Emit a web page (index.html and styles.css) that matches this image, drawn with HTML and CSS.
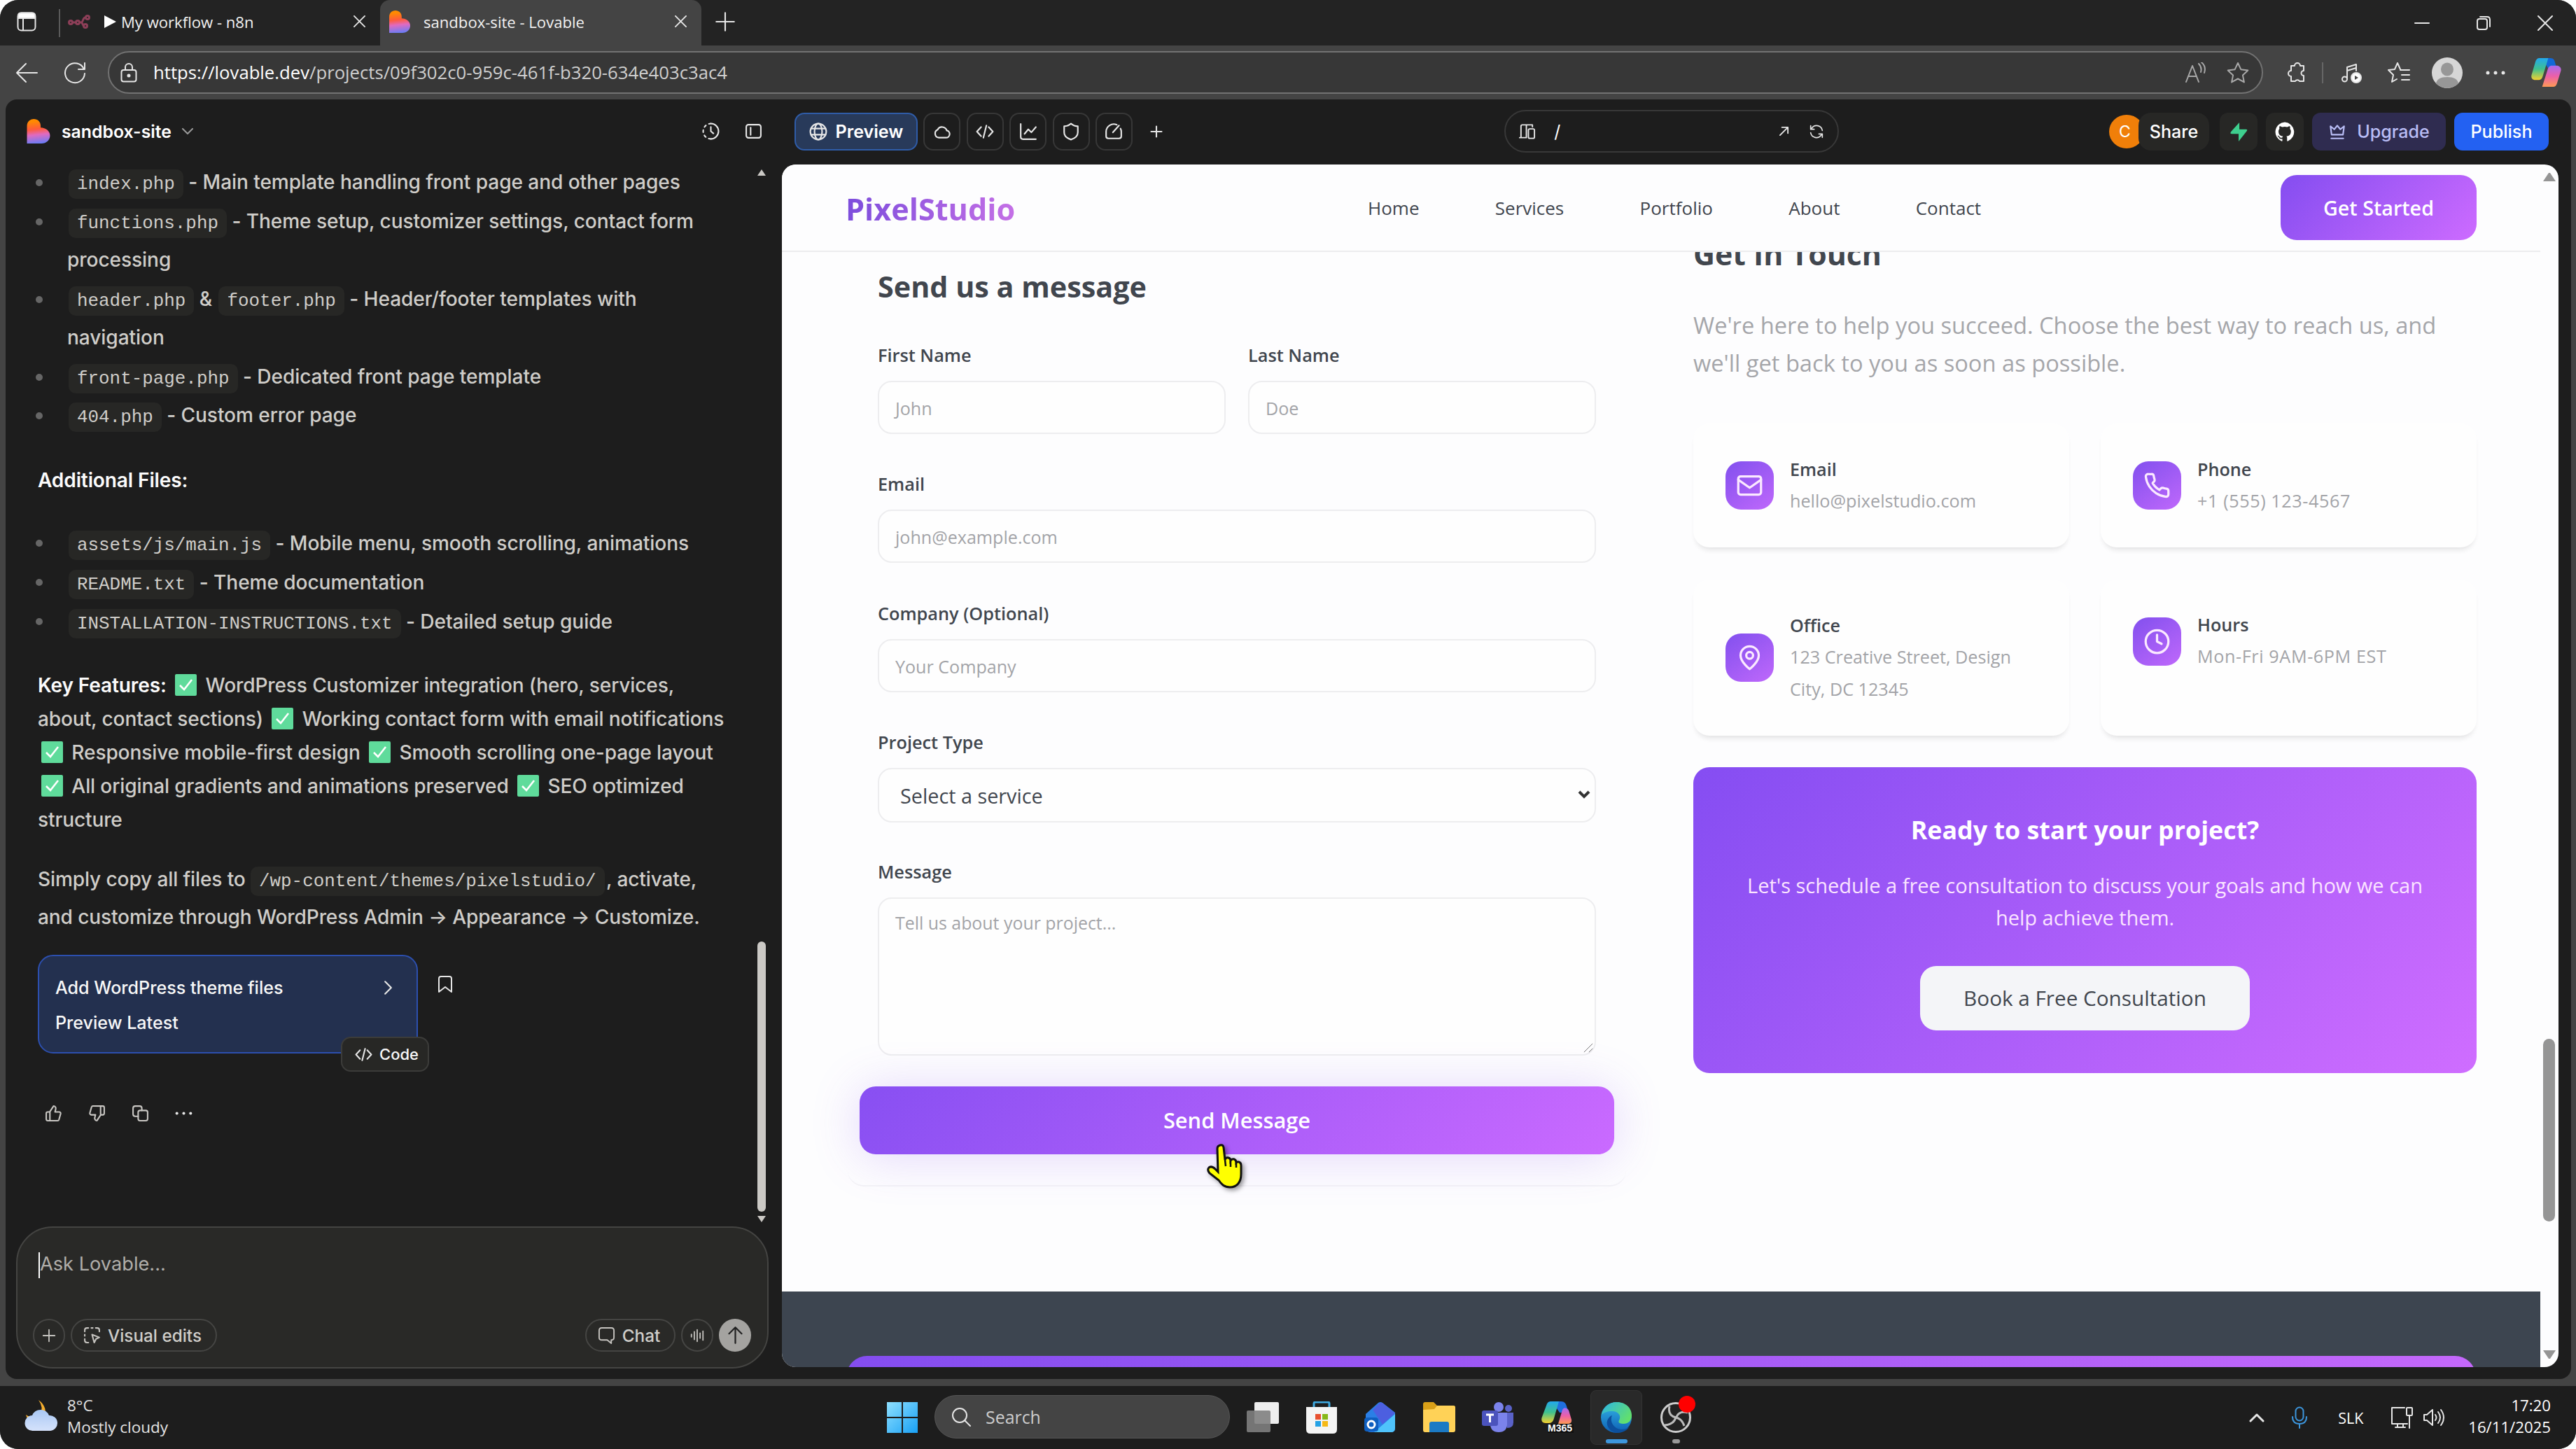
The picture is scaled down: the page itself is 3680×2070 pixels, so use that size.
FILE: index.html
```html
<!DOCTYPE html>
<html lang="en">
<head>
<meta charset="UTF-8">
<meta name="viewport" content="width=device-width, initial-scale=1.0">
<title>sandbox-site - Lovable</title>
<link rel="stylesheet" href="styles.css">
</head>
<body>
<svg class="defs" aria-hidden="true">
  <defs>
    <linearGradient id="heartFill" x1="0.3" y1="0" x2="0.4" y2="1">
      <stop offset="0.1" stop-color="#ff8a00"/>
      <stop offset="0.42" stop-color="#ff5a3c"/>
      <stop offset="0.65" stop-color="#e06ac0"/>
      <stop offset="1" stop-color="#6c7cf5"/>
    </linearGradient>
    <linearGradient id="winFill" x1="0" y1="0" x2="1" y2="1">
      <stop offset="0" stop-color="#8fe0ff"/>
      <stop offset="1" stop-color="#18a0f5"/>
    </linearGradient>
    <linearGradient id="copilotLeft" x1="0" y1="0" x2="0" y2="1">
      <stop offset="0" stop-color="#22a8ee"/>
      <stop offset="0.5" stop-color="#3fc08f"/>
      <stop offset="1" stop-color="#f3d02f"/>
    </linearGradient>
    <linearGradient id="copilotRight" x1="0" y1="0" x2="0" y2="1">
      <stop offset="0" stop-color="#a66cf0"/>
      <stop offset="0.5" stop-color="#ec5fa8"/>
      <stop offset="1" stop-color="#ff9a55"/>
    </linearGradient>
    <linearGradient id="edgeBlue" x1="0" y1="0" x2="0" y2="1">
      <stop offset="0" stop-color="#35b8e8"/>
      <stop offset="1" stop-color="#0d5fb4"/>
    </linearGradient>
    <linearGradient id="edgeGreen" x1="0" y1="0" x2="1" y2="0.6">
      <stop offset="0" stop-color="#2cb5e6"/>
      <stop offset="1" stop-color="#62e06c"/>
    </linearGradient>
    <linearGradient id="cloudFill" x1="0" y1="0" x2="0" y2="1">
      <stop offset="0" stop-color="#a9c8f4"/>
      <stop offset="1" stop-color="#d5e2fb"/>
    </linearGradient>
  </defs>
  <symbol id="heart" viewBox="0 0 32 34"><path fill="url(#heartFill)" d="M0 10C0 4 4 0 9.500 0S19 4 19 9.500v2.500C26 12 32 17 32 23S27 34 20 34H0z"/></symbol>
  <symbol id="x" viewBox="0 0 18 18"><path d="M1 1l16 16M17 1L1 17"/></symbol>
  <symbol id="plus" viewBox="0 0 24 24"><path d="M12 3v18M3 12h18"/></symbol>
  <symbol id="code" viewBox="0 0 24 24"><path d="M7 6l-5.500 6L7 18M17 6l5.500 6-5.500 6M14 4l-4 16"/></symbol>
  <symbol id="check" viewBox="0 0 31 31"><rect width="31" height="31" rx="2" fill="#5fdb9b"/><path d="M7 16l6 6L24 8" fill="none" stroke="#fff" stroke-width="2.600"/></symbol>
  <symbol id="copilot" viewBox="0 0 44 42">
    <path fill="#1268d8" d="M13 0h15c5 0 6 3 7 7l2 7H24l-5-9z"/>
    <path fill="url(#copilotLeft)" d="M12 0h13l-8 26c-1 4-3 6-7 6H6c-5 0-7-4-5-9L6 6c1-4 3-6 6-6z"/>
    <path fill="url(#copilotRight)" d="M32 42H16l8-25c1-4 3-6 7-6h6c5 0 8 4 6 9l-5 16c-1 4-3 6-6 6z"/>
  </symbol>
</svg>

<div class="window">
  <!-- browser tabs -->
  <div class="tabs">
    <svg class="line tab-actions" viewBox="0 0 28 28"><rect x="1.500" y="1.500" width="25" height="25" rx="5"/><path d="M9 9v17"/><path d="M2 5q0-3.500 4-3.500h16q4 0 4 3.500v4H2z" fill="#fff"/></svg>
    <span class="tab-sep"></span>
    <div class="tab">
      <svg class="n8n" viewBox="0 0 32 20"><g fill="none" stroke="#8d3f58" stroke-width="3"><circle cx="4" cy="11" r="2.500"/><circle cx="14" cy="11" r="2.500"/><circle cx="28" cy="4" r="2.500"/><circle cx="25" cy="16" r="2.500"/><path d="M6 11h6M16 11h3c3 0 2-7 6-7M19 11c2 0 2 5 4 5"/></g></svg>
      <span class="play"></span>
      <span class="tab-title">My workflow - n8n</span>
      <svg class="line close"><use href="#x"/></svg>
    </div>
    <div class="tab active">
      <svg class="fav"><use href="#heart"/></svg>
      <span class="tab-title">sandbox-site - Lovable</span>
      <svg class="line close"><use href="#x"/></svg>
    </div>
    <svg class="line new-tab"><use href="#plus"/></svg>
    <div class="win-buttons">
      <svg class="line" viewBox="0 0 22 22"><path d="M1 11h20"/></svg>
      <svg class="line" viewBox="0 0 22 22"><rect x="2" y="5" width="14" height="15" rx="3"/><path d="M6 2h10q4 0 4 4v10"/></svg>
      <svg class="line" viewBox="0 0 22 22"><path d="M1 1l20 20M21 1L1 21"/></svg>
    </div>
  </div>

  <!-- address row -->
  <div class="toolbar">
    <svg class="line back" viewBox="0 0 32 32"><path d="M31 16H2M15 3L2 16l13 13"/></svg>
    <svg class="line reload" viewBox="0 0 32 32"><path d="M29 11A14 14 0 1 0 30 17M30 2v9h-9"/></svg>
    <div class="address">
      <svg class="line lock" viewBox="0 0 24 28"><rect x="1.500" y="10" width="21" height="16.500" rx="3"/><path d="M7 10V6a5 5 0 0 1 10 0v4"/><circle cx="12" cy="18" r="1.500" fill="#fff"/></svg>
      <span class="url"><b>https://lovable.dev</b>/projects/09f302c0-959c-461f-b320-634e403c3ac4</span>
      <svg class="line dim read" viewBox="0 0 30 30"><path d="M2 28L11 5l9 23M5 20h12M20 2q5 5 3 12M24 0q7 6 4 15"/></svg>
      <svg class="line dim star" viewBox="0 0 32 32"><path d="M16 2l4.300 9.200 10 1.300-7.400 6.900 2 10L16 24.500 7.100 29.400l2-10-7.400-6.900 10-1.300z"/></svg>
    </div>
    <div class="browser-icons">
      <svg class="line" viewBox="0 0 32 32"><path d="M9 6h5a4 4 0 0 1 8 0h5v7a3.500 3.500 0 0 0 0 7v8h-6a3.500 3.500 0 0 0-6 0H9v-7a4 4 0 1 1 0-8z"/></svg>
      <span class="bar-sep"></span>
      <svg class="line media" viewBox="0 0 32 32"><path d="M11 25V8l13-4v9M11 13l13-4"/><circle cx="7.500" cy="25" r="3.500"/><circle cx="24" cy="23" r="7" fill="#fff"/><path d="M22 20v6l5-3z" fill="#444" stroke="none"/></svg>
      <svg class="line favorites" viewBox="0 0 32 32"><path d="M18 11l-4-9-4 9-9 1 7 7-2 10 7-4M18 12h13M20 19h11M20 26h11"/></svg>
      <svg class="avatar" viewBox="0 0 44 44"><circle cx="22" cy="22" r="22" fill="#d6d6d6"/><ellipse cx="22" cy="17" rx="9" ry="9.500" fill="#979797"/><path d="M6 37q2-9 16-9t16 9a22 22 0 0 1-32 0z" fill="#979797"/></svg>
      <svg class="dots" viewBox="0 0 28 6"><circle cx="3" cy="3" r="2.500"/><circle cx="14" cy="3" r="2.500"/><circle cx="25" cy="3" r="2.500"/></svg>
      <svg class="copilot"><use href="#copilot"/></svg>
    </div>
  </div>

  <div class="app">
    <!-- chat side -->
    <aside class="chat">
      <div class="chat-head">
        <svg class="logo"><use href="#heart"/></svg>
        <span class="project">sandbox-site</span>
        <svg class="line chev" viewBox="0 0 16 9"><path d="M1 1l7 7 7-7"/></svg>
        <svg class="line history" viewBox="0 0 24 24"><path d="M12 1.500a10.500 10.500 0 0 1 0 21"/><path d="M12 22.500a10.500 10.500 0 0 1 0-21" stroke-dasharray="3 4.500"/><path d="M12 6v6l3.500 3"/></svg>
        <svg class="line panel" viewBox="0 0 24 24"><rect x="2" y="3" width="20" height="18" rx="3"/><path d="M8 7v10"/></svg>
      </div>

      <div class="messages">
        <ul>
          <li><code>index.php</code> - Main template handling front page and other pages</li>
          <li><code>functions.php</code> - Theme setup, customizer settings, contact form<br>processing</li>
          <li><code>header.php</code> &amp; <code>footer.php</code> - Header/footer templates with<br>navigation</li>
          <li><code>front-page.php</code> - Dedicated front page template</li>
          <li><code>404.php</code> - Custom error page</li>
        </ul>
        <p class="sub"><strong>Additional Files:</strong></p>
        <ul class="extra">
          <li><code>assets/js/main.js</code> - Mobile menu, smooth scrolling, animations</li>
          <li><code>README.txt</code> - Theme documentation</li>
          <li><code>INSTALLATION-INSTRUCTIONS.txt</code> - Detailed setup guide</li>
        </ul>
        <p class="features"><strong>Key Features:</strong> <svg class="check"><use href="#check"/></svg> WordPress Customizer integration (hero, services,<br>
          about, contact sections) <svg class="check"><use href="#check"/></svg> Working contact form with email notifications<br>
          <svg class="check"><use href="#check"/></svg> Responsive mobile-first design <svg class="check"><use href="#check"/></svg> Smooth scrolling one-page layout<br>
          <svg class="check"><use href="#check"/></svg> All original gradients and animations preserved <svg class="check"><use href="#check"/></svg> SEO optimized<br>
          structure</p>
        <p class="install">Simply copy all files to <code>/wp-content/themes/pixelstudio/</code>&hairsp;, activate,<br>and customize through WordPress Admin → Appearance → Customize.</p>

        <div class="edit-row">
          <div class="edit-card">
            <div class="edit-title">Add WordPress theme files
              <svg class="line" viewBox="0 0 12 20"><path d="M2 2l8 8-8 8"/></svg>
            </div>
            <div class="edit-sub">Preview Latest</div>
            <div class="code-badge"><svg class="line"><use href="#code"/></svg>Code</div>
          </div>
          <svg class="line bookmark" viewBox="0 0 22 26"><path d="M2 24V5q0-3 3-3h12q3 0 3 3v19l-9-7z"/></svg>
        </div>

        <div class="feedback">
          <svg class="line" viewBox="0 0 24 24"><path d="M7 10v12M15 5.900L14 10h5.800a2 2 0 0 1 1.900 2.600l-2.300 8A2 2 0 0 1 17.500 22H4a2 2 0 0 1-2-2v-8a2 2 0 0 1 2-2h2.800L12 2a3.100 3.100 0 0 1 3 3.900z"/></svg>
          <svg class="line" viewBox="0 0 24 24"><path d="M17 14V2M9 18.100L10 14H4.200a2 2 0 0 1-1.900-2.600l2.300-8A2 2 0 0 1 6.500 2H20a2 2 0 0 1 2 2v8a2 2 0 0 1-2 2h-2.800L12 22a3.100 3.100 0 0 1-3-3.900z"/></svg>
          <svg class="line" viewBox="0 0 24 24"><rect x="9" y="8" width="13" height="14" rx="2.500"/><path d="M9 16H5q-3 0-3-3V5q0-3 3-3h6q3 0 3 3v3"/></svg>
          <svg class="dots" viewBox="0 0 28 6"><circle cx="3" cy="3" r="2.300"/><circle cx="14" cy="3" r="2.300"/><circle cx="25" cy="3" r="2.300"/></svg>
        </div>
        <div class="chat-scroll"><i class="up"></i><b></b><i class="down"></i></div>
      </div>

      <div class="composer">
        <div class="prompt">Ask Lovable...</div>
        <div class="composer-row">
          <span class="pill round"><svg class="line"><use href="#plus"/></svg></span>
          <span class="pill visual"><svg class="line" viewBox="0 0 24 24"><path d="M2 7V5q0-3 3-3h2M17 2h2q3 0 3 3v2M7 22H5q-3 0-3-3v-2M12 11l10 4-4.500 2L15 22zM11 2h2M2 11v2"/></svg>Visual edits</span>
          <span class="pill talk"><svg class="line" viewBox="0 0 26 26"><path d="M6 2h14q4 0 4 4v10q0 4-4 4v5l-6-5H6q-4 0-4-4V6q0-4 4-4z"/></svg>Chat</span>
          <span class="pill round"><svg class="line" viewBox="0 0 24 24"><path d="M3 10v4M7.500 6v12M12 3v18M16.500 8v8M21 5v14"/></svg></span>
          <span class="pill round send"><svg class="line" viewBox="0 0 24 24"><path d="M12 22V2M4 10l8-8 8 8"/></svg></span>
        </div>
      </div>
    </aside>

    <!-- preview side -->
    <main class="stage">
      <div class="stage-bar">
        <span class="mode on"><svg class="line" viewBox="0 0 24 24"><circle cx="12" cy="12" r="10.500"/><ellipse cx="12" cy="12" rx="5" ry="10.500"/><path d="M2.500 8h19M2.500 16h19"/></svg>Preview</span>
        <span class="mode"><svg class="line" viewBox="0 0 24 24"><path d="M17 20H7.500A5.500 5.500 0 0 1 6 9.500 6.500 6.500 0 0 1 18 10.500a4.800 4.800 0 0 1-1 9.500z"/></svg></span>
        <span class="mode"><svg class="line"><use href="#code"/></svg></span>
        <span class="mode"><svg class="line" viewBox="0 0 24 24"><path d="M2 2v17q0 3 3 3h17M7 15l5-6 4 4 6-7"/></svg></span>
        <span class="mode"><svg class="line" viewBox="0 0 24 24"><path d="M12 1.500c3 2.500 6 3.500 9 3.500v8c0 5-4 8-9 9.500C7 21 3 18 3 13V5c3 0 6-1 9-3.500z"/></svg></span>
        <span class="mode"><svg class="line" viewBox="0 0 24 24"><path d="M16 3a10 10 0 0 0-14 9v6q0 3 3 3h14q3 0 3-3v-6q0-2-1-4M11 13l8-9"/></svg></span>
        <svg class="line add-mode"><use href="#plus"/></svg>
        <div class="route">
          <svg class="line" viewBox="0 0 26 22"><path d="M2 20h10M4 20V3q0-2 2-2h15v3M12 2v18"/><rect x="15" y="7" width="9" height="14" rx="2"/></svg>
          <span>/</span>
          <svg class="line open" viewBox="0 0 16 16"><path d="M2 14L14 2M5 2h9v9"/></svg>
          <svg class="line refresh" viewBox="0 0 24 24"><path d="M22 10A10 10 0 0 0 4 6M2 2v6h6M2 14a10 10 0 0 0 18 4M22 22v-6h-6"/></svg>
        </div>
        <div class="stage-actions">
          <span class="user">C</span>
          <span class="btn share">Share</span>
          <span class="btn icon"><svg viewBox="0 0 24 26"><path fill="#3ecf8e" d="M13 1v9h9q2 0 1 2L12 26V16H3q-3 0-1-3z"/></svg></span>
          <span class="btn icon"><svg viewBox="0 0 24 24"><path fill="#fff" d="M12 .5a12 12 0 0 0-3.800 23.200c.6.100.8-.3.8-.6v-2.200c-3.300.7-4-1.400-4-1.400-.6-1.400-1.400-1.800-1.400-1.800-1.100-.7.1-.7.1-.7 1.200.1 1.800 1.200 1.800 1.200 1.100 1.800 2.800 1.300 3.500 1 .1-.8.400-1.300.8-1.600-2.700-.3-5.500-1.300-5.500-5.900 0-1.300.5-2.400 1.200-3.200-.1-.3-.5-1.500.1-3.200 0 0 1-.3 3.300 1.200a11.500 11.500 0 0 1 6 0c2.300-1.500 3.300-1.200 3.300-1.200.7 1.700.2 2.900.1 3.200.8.800 1.200 1.900 1.200 3.200 0 4.600-2.800 5.600-5.500 5.900.4.400.8 1.100.8 2.200v3.300c0 .3.200.7.800.6A12 12 0 0 0 12 .5z"/></svg></span>
          <span class="btn upgrade"><svg class="line" viewBox="0 0 24 24"><path d="M3 5l1.500 11h15L21 5l-5 4-4-5-4 5zM4 21h16"/></svg>Upgrade</span>
          <span class="btn publish">Publish</span>
        </div>
      </div>

      <div class="frame">
        <div class="site">
          <header class="site-head">
            <div class="brand">PixelStudio</div>
            <nav>
              <a>Home</a><a>Services</a><a>Portfolio</a><a>About</a><a>Contact</a>
            </nav>
            <a class="get-started">Get Started</a>
          </header>

          <section class="contact">
            <form class="contact-form">
              <h3>Send us a message</h3>
              <div class="two">
                <div class="field"><label>First Name</label><div class="input">John</div></div>
                <div class="field"><label>Last Name</label><div class="input">Doe</div></div>
              </div>
              <div class="field"><label>Email</label><div class="input">john@example.com</div></div>
              <div class="field"><label>Company (Optional)</label><div class="input">Your Company</div></div>
              <div class="field"><label>Project Type</label>
                <div class="input select">Select a service<svg viewBox="0 0 18 12"><path d="M2 2l7 7 7-7"/></svg></div>
              </div>
              <div class="field"><label>Message</label>
                <div class="input area">Tell us about your project...<svg viewBox="0 0 16 16"><path d="M1 15L15 1M9 15l6-6"/></svg></div>
              </div>
              <div class="submit">Send Message
                <svg class="hand" viewBox="0 0 52 66"><path d="M20 3q4-1 5 3l2 18q1-4 5-3 3 1 3 4 2-3 5-2 3 1 3 5 2-2 4-1 3 1 3 5v12c0 12-6 19-16 19-8 0-12-4-16-10L5 43q-4-5-1-8 4-3 9 2l4 4L16 8q0-4 4-5z" fill="#ff0" stroke="#111" stroke-width="3"/><path d="M27 24l1 9M35 25v9M43 28v7" stroke="#111" stroke-width="2.500"/></svg>
              </div>
            </form>

            <div class="info">
              <h3>Get In Touch</h3>
              <p>We're here to help you succeed. Choose the best way to reach us, and<br>we'll get back to you as soon as possible.</p>
              <div class="cards">
                <div class="card">
                  <span class="tile"><svg viewBox="0 0 24 24"><rect x="2" y="4" width="20" height="16" rx="2"/><path d="M22 7l-10 7L2 7"/></svg></span>
                  <div><h4>Email</h4><span>hello@pixelstudio.com</span></div>
                </div>
                <div class="card">
                  <span class="tile"><svg viewBox="0 0 24 24"><path d="M22 16.900v3a2 2 0 0 1-2.200 2 19.800 19.800 0 0 1-8.600-3.100 19.500 19.500 0 0 1-6-6A19.800 19.800 0 0 1 2.100 4.200 2 2 0 0 1 4.100 2h3a2 2 0 0 1 2 1.700 12.800 12.800 0 0 0 .7 2.800 2 2 0 0 1-.5 2.100L8.100 9.900a16 16 0 0 0 6 6l1.300-1.300a2 2 0 0 1 2.100-.4 12.800 12.800 0 0 0 2.800.7 2 2 0 0 1 1.700 2z"/></svg></span>
                  <div><h4>Phone</h4><span class="num">+1 (555) 123-4567</span></div>
                </div>
                <div class="card">
                  <span class="tile"><svg viewBox="0 0 24 24"><path d="M20 10c0 6-8 12-8 12s-8-6-8-12a8 8 0 0 1 16 0z"/><circle cx="12" cy="10" r="3"/></svg></span>
                  <div><h4>Office</h4><span>123 Creative Street, Design<br>City, DC 12345</span></div>
                </div>
                <div class="card top">
                  <span class="tile"><svg viewBox="0 0 24 24"><circle cx="12" cy="12" r="10"/><path d="M12 6v6l4 2"/></svg></span>
                  <div><h4>Hours</h4><span class="num">Mon-Fri 9AM-6PM EST</span></div>
                </div>
              </div>
              <div class="cta">
                <h4>Ready to start your project?</h4>
                <p>Let's schedule a free consultation to discuss your goals and how we can<br>help achieve them.</p>
                <a>Book a Free Consultation</a>
              </div>
            </div>
          </section>

          <footer class="site-foot"><div class="foot-band"></div></footer>
        </div>
        <div class="site-scroll"><i class="up"></i><b></b><i class="down"></i></div>
      </div>
    </main>
  </div>

  <!-- windows taskbar -->
  <div class="taskbar">
    <div class="weather">
      <svg viewBox="0 0 48 46"><path d="M20 1q8 11 2 20-8 9-20 1 2 10 12 11l14-6q6-16-8-26z" fill="#f5ae2e"/><path d="M12 45a11 11 0 0 1-1-22 13 13 0 0 1 24 0 11 11 0 0 1 2 22z" fill="url(#cloudFill)"/></svg>
      <div class="forecast">8°C<br>Mostly cloudy</div>
    </div>
    <div class="task-icons">
      <svg class="win" viewBox="0 0 44 44"><path fill="url(#winFill)" d="M0 0h21v21H0zM23 0h21v21H23zM0 23h21v21H0zM23 23h21v21H23z"/></svg>
      <div class="search"><svg class="line" viewBox="0 0 28 28"><circle cx="12" cy="12" r="10"/><path d="M19 19l8 8"/></svg>Search</div>
      <svg viewBox="0 0 46 46"><rect x="11" y="1" width="35" height="31" rx="2" fill="#eee"/><rect x="0" y="13" width="34" height="31" rx="2" fill="#808080" opacity=".9"/></svg>
      <svg viewBox="0 0 46 46"><path d="M12 10V3q0-2 2-2h18q2 0 2 2v7" fill="none" stroke="#3fa9e0" stroke-width="3"/><path d="M1 8h44v32q0 6-6 6H7q-6 0-6-6z" fill="#f4f4f4"/><path fill="#e8502f" d="M14 18h8v8h-8z"/><path fill="#86b817" d="M24 18h8v8h-8z"/><path fill="#25a2e5" d="M14 28h8v8h-8z"/><path fill="#f5b917" d="M24 28h8v8h-8z"/></svg>
      <svg viewBox="0 0 46 46"><path d="M2 18L20 2q3-2 6 0l18 14v22q0 6-6 6H10q-8 0-8-6z" fill="#2a7fe6"/><path d="M12 12l10-10q3-1 5 1l17 14-18 16z" fill="#4c5fe0"/><path d="M44 18v20q0 6-6 6H14z" fill="#4fc3fb"/><rect y="23" width="20" height="20" rx="4" fill="#0f5fc0"/><circle cx="10" cy="33" r="5" fill="none" stroke="#fff" stroke-width="3"/></svg>
      <svg viewBox="0 0 46 46"><path d="M0 4q0-3 3-3h12l5 5h23q3 0 3 3v12H0z" fill="#d9a018"/><path d="M0 12l16-1 4-5h23q3 0 3 3v32q0 3-3 3H3q-3 0-3-3z" fill="#ffd257"/><path d="M9 44V32q0-3 3-3h22q3 0 3 3v12z" fill="#1b7ac4"/></svg>
      <svg viewBox="0 0 46 46"><circle cx="24" cy="8" r="7" fill="#7b83eb"/><circle cx="38" cy="10" r="5" fill="#5a62c8"/><path d="M30 16h15v14q0 8-9 8z" fill="#5a62c8"/><path d="M12 16h24v16q0 12-12 12T12 32z" fill="#7b83eb"/><rect y="13" width="23" height="22" rx="3" fill="#4b53bc"/><path d="M6 19h11M11.500 19v11" stroke="#fff" stroke-width="3"/></svg>
      <div class="m365"><svg viewBox="0 0 44 34"><path fill="#1f6fe0" d="M14 0h14c5 0 7 3 8 7l3 9H26l-6-9z"/><path fill="url(#copilotLeft)" d="M13 0h12l-7 24c-1 4-3 7-7 7H6c-5 0-7-4-5-9L7 6c1-4 3-6 6-6z"/><path fill="url(#copilotRight)" d="M30 12q2-4 6-2 3 1 4 6l3 10q1 5-4 6H24z"/></svg><span>M365</span></div>
      <div class="edge">
        <svg viewBox="0 0 46 46"><circle cx="23" cy="23" r="22" fill="url(#edgeBlue)"/><path d="M2 19C4 8 13 1 24 1c13 0 21 9 21 19 0 8-5 12-12 12-5 0-8-2-6-5 4-7-2-13-10-13-7 0-12 2-15 5z" fill="url(#edgeGreen)"/><path d="M17 20c-4 8 2 20 14 20 5 0 9-2 11-4-4 6-11 9-18 9-9-1-16-9-14-17 1-4 4-7 7-8z" fill="#0c4f9c"/></svg>
      </div>
      <div class="obs">
        <svg viewBox="0 0 46 46"><circle cx="23" cy="23" r="20.500" fill="#222" stroke="#ccc" stroke-width="3"/><path d="M14 7q-3 13 9 16 9 2 12 12M23 23q-3 10-16 11M24 22q4-9 16-6" fill="none" stroke="#bbb" stroke-width="3"/></svg>
      </div>
    </div>
    <div class="tray">
      <svg class="line up-chev" viewBox="0 0 22 14"><path d="M2 12l9-9 9 9"/></svg>
      <svg class="line mic" viewBox="0 0 24 32"><rect x="6.500" y="1.500" width="11" height="19" rx="5.500"/><path d="M2 15q0 10 10 10t10-10M12 25v6"/></svg>
      <span class="lang">SLK</span>
      <svg class="line net" viewBox="0 0 32 32"><path d="M20 2H2v23h22M7 30h14M10 25v5M18 25v5"/><rect x="23" y="2" width="8" height="11" rx="1"/><path d="M27 13v18"/></svg>
      <svg class="line vol" viewBox="0 0 32 26"><path d="M2 9h4l8-7v22l-8-7H2zM18 9q3 4 0 8M22 5q6 8 0 16M26 2q8 11 0 22"/></svg>
      <div class="clock">17:20<br>16/11/2025</div>
    </div>
  </div>
</div>
</body>
</html>
```
FILE: styles.css
```css
* {
  box-sizing: border-box;
}
body {
  margin: 0;
  background: #fff;
  font-family: "Open Sans", sans-serif;
}
.defs {
  position: absolute;
  width: 0;
  height: 0;
}
.window {
  width: 3680px;
  height: 2070px;
  display: flex;
  flex-direction: column;
  overflow: hidden;
  border-radius: 26px;
  background: #444;
  white-space: nowrap;
}
svg {
  display: block;
  flex: none;
}
.line {
  fill: none;
  stroke: #e6e6e6;
  stroke-width: 2;
  stroke-linecap: round;
  stroke-linejoin: round;
}

/* tabs */
.tabs {
  height: 65px;
  display: flex;
  align-items: center;
  padding-left: 24px;
  background: #232323;
  color: #f2f2f2;
  font-size: 22.1px;
}
.tab-actions {
  width: 28px;
  height: 28px;
  margin-bottom: 3px;
}
.tab-sep {
  width: 2px;
  height: 40px;
  margin-left: 32px;
  background: #5a5a5a;
}
.tab {
  width: 457px;
  height: 65px;
  display: flex;
  align-items: center;
  padding: 0 21px 4px 11px;
}
.tab.active {
  width: 459px;
  padding-left: 13px;
  background: #444;
  border-radius: 14px 14px 0 0;
}
.n8n {
  width: 32px;
  height: 20px;
}
.play {
  margin: 0 7px 0 20px;
  border-left: 17px solid #fff;
  border-top: 9px solid transparent;
  border-bottom: 9px solid transparent;
}
.fav {
  width: 30px;
  height: 32px;
  margin-right: 19px;
}
.close {
  width: 17px;
  height: 17px;
  margin-left: auto;
}
.new-tab {
  width: 34px;
  height: 34px;
  margin: 0 0 4px 17px;
  stroke-width: 1.5;
}
.win-buttons {
  display: flex;
  gap: 66px;
  margin-left: auto;
  margin-right: 33px;
}
.win-buttons svg {
  width: 22px;
  height: 22px;
}

/* address row */
.toolbar {
  height: 77px;
  display: flex;
  align-items: center;
  padding-left: 22px;
}
.back {
  width: 32px;
  height: 32px;
}
.reload {
  width: 32px;
  height: 32px;
  margin: 0 31px 0 37px;
}
.address {
  width: 3079px;
  height: 61px;
  display: flex;
  align-items: center;
  padding: 0 18px 0 16px;
  border: 2px solid #727272;
  border-radius: 31px;
  background: #373737;
}
.lock {
  width: 24px;
  height: 28px;
  margin-right: 23px;
}
.url {
  flex: 1;
  font-size: 25.7px;
  color: #cfcfcf;
}
.url b {
  font-weight: 400;
  color: #fff;
}
.read {
  width: 30px;
  height: 30px;
  margin-right: 30px;
}
.star {
  width: 32px;
  height: 32px;
}
.dim {
  stroke: #a8a8a8;
}
.browser-icons {
  flex: 1;
  display: flex;
  align-items: center;
  padding-left: 31px;
}
.browser-icons svg {
  width: 32px;
  height: 32px;
}
.bar-sep {
  width: 2px;
  height: 30px;
  margin: 0 23px 0 21px;
  background: #666;
}
.favorites {
  margin: 0 31px 0 37px;
}
.browser-icons .avatar {
  width: 44px;
  height: 44px;
}
.browser-icons .dots {
  width: 28px;
  height: 6px;
  margin: 0 37px 0 33px;
}
.browser-icons .copilot {
  width: 43px;
  height: 41px;
}
.dots {
  fill: #e6e6e6;
}

/* app shell */
.app {
  width: 3665px;
  height: 1828px;
  display: flex;
  margin-left: 8px;
  background: #1d1d1d;
  border-radius: 16px;
  font-family: Inter, sans-serif;
}
.chat {
  width: 1109px;
  display: flex;
  flex-direction: column;
}
.chat-head {
  height: 91px;
  display: flex;
  align-items: center;
  padding: 0 28px 0 30px;
}
.logo {
  width: 34px;
  height: 35px;
  margin-right: 16px;
}
.project {
  font-size: 24.8px;
  font-weight: 600;
  color: #fff;
}
.chev {
  width: 16px;
  height: 9px;
  margin: 0 auto 0 15px;
  stroke: #9a9a9a;
}
.history {
  width: 25px;
  height: 25px;
  margin-right: 36px;
}
.panel {
  width: 25px;
  height: 25px;
}
.messages {
  position: relative;
  height: 1519px;
  padding-left: 46px;
  color: #cfcdc9;
  font-size: 28.1px;
  font-weight: 450;
  letter-spacing: -0.14px;
}
.messages ul {
  margin: 0;
  padding: 0;
  list-style: none;
}
.messages li {
  position: relative;
  padding-left: 42px;
  line-height: 55.5px;
  letter-spacing: -0.08px;
}
.messages li::before {
  content: "";
  position: absolute;
  left: -3px;
  top: 23px;
  width: 10px;
  height: 10px;
  border-radius: 50%;
  background: #666;
}
.messages .extra li {
  line-height: 56.3px;
}
code {
  padding: 6px 12px;
  border-radius: 10px;
  background: #272725;
  font-family: "Liberation Mono", monospace;
  font-size: 25.9px;
  line-height: 0;
  letter-spacing: 0;
}
.messages p {
  margin: 0;
}
li code {
  margin-left: 2px;
}
.messages strong {
  font-weight: 600;
  color: #fbfbfb;
}
.sub {
  padding: 40px 0 38px;
  line-height: 48px;
}
.features {
  padding: 39px 0 34px;
  line-height: 48px;
}
.check {
  display: inline-block;
  width: 31px;
  height: 31px;
  margin: 0 5px;
  vertical-align: -5px;
}
.install {
  line-height: 54px;
}
.edit-row {
  display: flex;
  margin-top: 27px;
}
.edit-card {
  position: relative;
  width: 543px;
  height: 141px;
  padding: 20px 23px;
  border: 2px solid #2c4fae;
  border-radius: 22px;
  background: #23304f;
  color: #f8f8f8;
  font-size: 25.1px;
  font-weight: 550;
  line-height: 50px;
  letter-spacing: 0;
}
.edit-title {
  display: flex;
  align-items: center;
  justify-content: space-between;
}
.edit-title svg {
  width: 13px;
  height: 22px;
  margin-right: 11px;
}
.code-badge {
  position: absolute;
  right: -18px;
  bottom: -28px;
  width: 126px;
  height: 50px;
  display: flex;
  align-items: center;
  gap: 10px;
  padding-left: 18px;
  border: 2px solid #3c3c3a;
  border-radius: 14px;
  background: #272725;
  font-size: 22px;
}
.code-badge svg {
  width: 25px;
  height: 25px;
}
.bookmark {
  width: 22px;
  height: 26px;
  margin: 29px 0 0 28px;
}
.feedback {
  display: flex;
  align-items: center;
  gap: 37px;
  margin-top: 73px;
  padding-left: 10px;
}
.feedback svg {
  width: 25px;
  height: 25px;
}
.feedback .line {
  stroke: #c9c7c3;
}
.chat-scroll {
  position: absolute;
  left: 1074px;
  top: 9px;
  width: 12px;
  height: 1504px;
  display: flex;
  flex-direction: column;
  justify-content: space-between;
}
.chat-scroll b {
  height: 386px;
  margin-top: 1087px;
  border-radius: 6px;
  background: #cbc9c5;
}
.up,
.down {
  border: 6px solid transparent;
  border-top: 0;
  border-bottom: 9px solid #cbc9c5;
}
.down {
  border-top: 9px solid #cbc9c5;
  border-bottom: 0;
}
.composer {
  width: 1075px;
  height: 203px;
  margin-left: 15px;
  padding: 35px 23px 0 22px;
  border: 2px solid #444442;
  border-radius: 52px;
  background: #292927;
}
.prompt {
  height: 37px;
  margin: 0 0 58px 8px;
  border-left: 2px solid #fff;
  color: #b0aeaa;
  font-size: 27.2px;
  line-height: 34px;
}
.composer-row {
  display: flex;
  gap: 8px;
}
.pill {
  height: 47px;
  display: flex;
  align-items: center;
  justify-content: center;
  gap: 10px;
  border: 2px solid #454543;
  border-radius: 24px;
  color: #cfcdc9;
  font-size: 24.3px;
  font-weight: 500;
}
.pill svg {
  width: 25px;
  height: 25px;
  stroke: #c5c3bf;
}
.pill.round {
  width: 46px;
}
.pill.round svg {
  width: 22px;
  height: 22px;
}
.pill.visual {
  width: 209px;
  padding-right: 4px;
}
.pill.talk {
  width: 129px;
  margin-left: auto;
  padding-right: 4px;
}
.pill.send {
  border: 0;
  background: #a4a3a0;
}
.pill.send svg {
  width: 27px;
  height: 27px;
  stroke: #222;
}

/* preview toolbar */
.stage {
  width: 2538px;
}
.stage-bar {
  height: 93px;
  display: flex;
  align-items: center;
  padding: 0 14px 2px 18px;
  color: #fff;
  font-size: 25.1px;
}
.mode {
  width: 53px;
  height: 54px;
  display: flex;
  align-items: center;
  justify-content: center;
  gap: 12px;
  margin-right: 8.4px;
  border: 2px solid #373737;
  border-radius: 14px;
}
.mode svg {
  width: 26px;
  height: 26px;
}
.mode.on {
  width: 176px;
  border-color: #2f5ca8;
  background: #283a5a;
  font-weight: 600;
}
.add-mode {
  width: 20px;
  height: 20px;
  margin-left: 16px;
  stroke-width: 2.5;
}
.route {
  width: 478px;
  height: 61px;
  display: flex;
  align-items: center;
  margin-left: 487px;
  padding: 0 20px 0 18px;
  border: 2px solid #383838;
  border-radius: 31px;
}
.route svg {
  width: 25px;
  height: 22px;
}
.route span {
  flex: 1;
  margin-left: 26px;
}
.route .open {
  width: 15px;
  height: 15px;
  margin-right: 29px;
}
.route .refresh {
  width: 20px;
  height: 20px;
}
.stage-actions {
  flex: 1;
  display: flex;
  align-items: center;
  justify-content: flex-end;
  font-weight: 550;
}
.user {
  width: 50px;
  height: 48px;
  padding-left: 14px;
  border-radius: 50%;
  background: #f07f09;
  font-size: 23px;
  line-height: 48px;
  font-weight: 400;
}
.btn {
  height: 54px;
  display: flex;
  align-items: center;
  justify-content: center;
  margin-left: 12px;
  border-radius: 12px;
  background: #272725;
}
.btn.share {
  width: 101px;
  margin: 0 3px 0 -8px;
  border-radius: 18px;
}
.btn.icon {
  width: 54px;
}
.btn.icon svg {
  width: 28px;
  height: 28px;
}
.btn.upgrade {
  width: 191px;
  gap: 15px;
  background: #2f2c50;
  color: #b9bdf5;
}
.btn.upgrade svg {
  width: 26px;
  height: 26px;
  stroke: #b9bdf5;
}
.btn.publish {
  width: 135px;
  background: #2361f2;
}

/* previewed site */
.frame {
  height: 1718px;
  display: flex;
  overflow: hidden;
  border-radius: 20px;
  background: #fdfdfe;
  font-family: "Open Sans", sans-serif;
  color: #41464e;
}
.site {
  width: 2512px;
  display: flex;
  flex-direction: column;
}
.site-head {
  position: relative;
  z-index: 1;
  height: 125px;
  display: flex;
  align-items: center;
  padding: 0 91px 0 91px;
  border-bottom: 2px solid #ececee;
  background: #fdfdfe;
}
.brand {
  width: 746px;
  padding-top: 4px;
  font-size: 43.2px;
  font-weight: 700;
  color: transparent;
  background: linear-gradient(90deg, #7c4ddc, #c570e6 245px) text;
  -webkit-background-clip: text;
}
nav {
  display: flex;
  gap: 108.3px;
  font-size: 26px;
  font-weight: 500;
}
.get-started {
  width: 280px;
  height: 93px;
  margin-left: auto;
  border-radius: 23px;
  background: linear-gradient(135deg, #844df0, #cd6bff);
  color: #fff;
  font-size: 28.7px;
  font-weight: 600;
  line-height: 93px;
  text-align: center;
}
.contact {
  height: 1485px;
  display: flex;
  padding: 0 91px 0 94px;
}
h3,
h4,
p {
  margin: 0;
}
.contact-form {
  width: 1112px;
  height: 1335px;
  padding: 22px 43px 0;
  border-bottom: 2px solid #f3f3f6;
  border-radius: 0 0 23px 23px;
}
.contact-form h3 {
  height: 55px;
  margin-bottom: 56px;
  font-size: 41.3px;
  line-height: 55px;
}
.two {
  display: grid;
  grid-template-columns: 1fr 1fr;
  gap: 32px;
}
.field {
  margin-bottom: 57.4px;
}
label {
  display: block;
  height: 29px;
  margin-bottom: 22px;
  font-size: 25.3px;
  font-weight: 600;
  line-height: 29px;
}
.input {
  position: relative;
  height: 76px;
  padding: 0 23px;
  border: 2px solid #ededef;
  border-radius: 20px;
  background: #fefefe;
  color: #a3a4a8;
  font-size: 25.1px;
  line-height: 75px;
}
.select {
  height: 78px;
  display: flex;
  align-items: center;
  justify-content: space-between;
  margin-bottom: -2px;
  padding: 0 6px 0 30px;
  color: #41464e;
  font-size: 28.8px;
}
.select svg {
  width: 18px;
  height: 12px;
  margin-bottom: 2px;
  fill: none;
  stroke: #333;
  stroke-width: 4;
}
.area {
  height: 226px;
  padding-top: 14px;
  font-size: 24.9px;
  line-height: 40px;
}
.area svg {
  position: absolute;
  right: 2px;
  bottom: 2px;
  width: 14px;
  height: 14px;
  stroke: #666;
}
.submit {
  position: relative;
  height: 97px;
  margin: -13px -26px 0;
  border-radius: 23px;
  background: linear-gradient(135deg, #884ff2, #ca6aff);
  box-shadow: 0 4px 68px rgba(132, 77, 240, 0.22);
  color: #fff;
  font-size: 30.8px;
  font-weight: 600;
  line-height: 96px;
  text-align: center;
}
.hand {
  position: absolute;
  left: 495px;
  top: 81px;
  width: 52px;
  height: 66px;
  filter: drop-shadow(3px 3px 3px rgba(0, 0, 0, 0.4));
}
.info {
  width: 1119px;
  margin-left: auto;
}
.info h3 {
  height: 77px;
  margin-top: -25px;
  font-size: 42.8px;
  line-height: 55px;
}
.info > p {
  height: 193px;
  color: #a5a6aa;
  font-size: 32.65px;
  line-height: 53.7px;
  padding-top: 26px;
}
.cards {
  display: grid;
  grid-template-columns: 537px 537px;
  grid-template-rows: 177px 223px;
  gap: 46px 45px;
}
.card {
  display: flex;
  align-items: center;
  padding: 0 45px 0 46px;
  border-radius: 23px;
  background: #fefefe;
  box-shadow: 0 7px 8px -4px rgba(0, 0, 0, 0.09), 0 6px 12px -6px rgba(0, 0, 0, 0.05);
  color: #a3a4a8;
  font-size: 25.2px;
  line-height: 46px;
}
.card.top {
  align-items: flex-start;
  padding-top: 43px;
}
.card h4 {
  color: #41464e;
  font-size: 25.2px;
  font-weight: 600;
  line-height: 43px;
}
.card.top .tile {
  margin-top: 11px;
}
.num {
  letter-spacing: 0.6px;
}
.tile {
  width: 69px;
  height: 69px;
  display: flex;
  align-items: center;
  justify-content: center;
  margin-right: 23px;
  border-radius: 22px;
  background: linear-gradient(145deg, #8250ee, #bf68fb);
}
.tile svg {
  width: 39px;
  height: 39px;
  fill: none;
  stroke: #fbe9ff;
  stroke-width: 2;
  stroke-linecap: round;
  stroke-linejoin: round;
}
.cta {
  height: 437px;
  margin-top: 45px;
  padding-top: 61px;
  border-radius: 23px;
  background: linear-gradient(135deg, #854df2, #cf6dff);
  color: #fbe4ff;
  text-align: center;
}
.cta h4 {
  color: #fff;
  font-size: 35.8px;
  line-height: 56px;
}
.cta p {
  margin: 29px 0 46px;
  font-size: 29px;
  line-height: 46px;
}
.cta a {
  display: block;
  width: 471px;
  height: 92px;
  margin: 0 auto;
  border-radius: 23px;
  background: #f4f5f8;
  color: #41464e;
  font-size: 29.7px;
  font-weight: 500;
  line-height: 92px;
}
.site-foot {
  height: 108px;
  padding: 92px 92px 0 92px;
  background: #3d4550;
}
.foot-band {
  height: 60px;
  border-radius: 30px;
  background: linear-gradient(90deg, #844df0, #c468fb);
}
.site-scroll {
  width: 26px;
  display: flex;
  flex-direction: column;
  padding: 12px 4px;
}
.site-scroll b {
  width: 17px;
  height: 262px;
  margin: 1225px 0 184px;
  border-radius: 9px;
  background: #959595;
}
.site-scroll i {
  border-width: 8px;
  border-top-width: 0;
  border-bottom-width: 12px;
  border-bottom-color: #959595;
}
.site-scroll .down {
  border-top: 12px solid #959595;
  border-bottom-width: 0;
}

/* taskbar */
.taskbar {
  height: 90px;
  display: flex;
  align-items: center;
  margin-top: 10px;
  padding: 0 36px 0 35px;
  background: #1d1d1d;
  color: #fff;
  font-size: 22.5px;
  line-height: 31px;
}
.weather {
  width: 1232px;
  display: flex;
  align-items: center;
  gap: 13px;
  color: #e3e3e3;
}
.weather svg {
  width: 48px;
  height: 46px;
  margin-bottom: 6px;
}
.forecast,
.clock {
  padding-bottom: 4px;
}
.task-icons {
  display: flex;
  align-items: center;
  gap: 38px;
}
.task-icons svg {
  width: 46px;
  height: 46px;
}
.task-icons .win {
  width: 44px;
  height: 44px;
  margin-right: -14px;
}
.search {
  width: 422px;
  height: 62px;
  display: flex;
  align-items: center;
  gap: 21px;
  margin: 0 -14px 2px 0;
  padding-left: 23px;
  border: 1px solid #555;
  border-radius: 31px;
  background: #444;
  color: #ccc;
  font-size: 24.9px;
}
.task-icons .search svg {
  width: 28px;
  height: 28px;
}
.m365 {
  position: relative;
}
.task-icons .m365 svg {
  height: 34px;
  margin-bottom: 12px;
}
.m365 span {
  position: absolute;
  left: 10px;
  bottom: 1px;
  width: 37px;
  height: 13px;
  background: #111;
  font: 700 14px/13px "Liberation Sans", sans-serif;
}
.edge {
  position: relative;
  width: 74px;
  height: 78px;
  margin: 0 -13px;
  padding: 15px 13px;
  border: 1px solid #333;
  border-radius: 8px;
  background: #292929;
}
.edge::after {
  content: "";
  position: absolute;
  left: 21px;
  bottom: 1px;
  width: 31px;
  height: 6px;
  border-radius: 3px;
  background: #3c96dd;
}
.obs {
  position: relative;
}
.obs::before {
  content: "";
  position: absolute;
  right: -5px;
  top: -8px;
  width: 24px;
  height: 24px;
  border-radius: 50%;
  background: #f00;
}
.obs::after {
  content: "";
  position: absolute;
  left: 18px;
  bottom: -14px;
  width: 11px;
  height: 6px;
  border-radius: 3px;
  background: #999;
}
.tray {
  flex: 1;
  display: flex;
  align-items: center;
  justify-content: flex-end;
}
.up-chev {
  width: 22px;
  height: 14px;
  margin-right: 38px;
  stroke-width: 3;
}
.mic {
  width: 24px;
  height: 32px;
  margin-right: 43px;
  stroke: #3c96dd;
}
.lang {
  width: 38px;
  margin-right: 37px;
  font-size: 21.5px;
}
.net {
  width: 32px;
  height: 32px;
  margin-right: 14px;
}
.vol {
  width: 32px;
  height: 28px;
  margin-right: 33px;
}
.clock {
  font-size: 22.2px;
  text-align: right;
}
```
